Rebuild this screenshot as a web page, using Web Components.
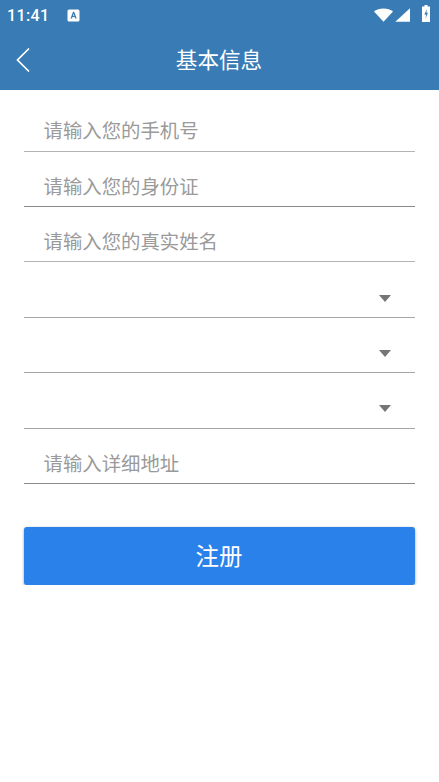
<!DOCTYPE html>
<html lang="zh">
<head>
<meta charset="UTF-8">
<title>基本信息</title>
<style>
  html, body { margin: 0; padding: 0; background: #fff; }
  body { font-family: Roboto, "Noto Sans CJK SC", sans-serif; }
</style>
</head>
<body>
  <app-header title="基本信息" time="11:41"></app-header>
  <main-form>
    <text-row>请输入您的手机号</text-row>
    <text-row dark>请输入您的身份证</text-row>
    <text-row>请输入您的真实姓名</text-row>
    <select-row></select-row>
    <select-row></select-row>
    <select-row></select-row>
    <text-row dark>请输入详细地址</text-row>
    <submit-button>注册</submit-button>
  </main-form>

<script>
  class AppHeader extends HTMLElement {
    constructor() {
      super();
      this.attachShadow({ mode: 'open' });
      this.shadowRoot.innerHTML = `
        <style>
          :host { display: block; height: 90px; background: #397cb5; color: #fff; }
          .status { height: 30px; display: flex; align-items: center; padding: 0 9px 0 7px; }
          .time { font: 500 16px Roboto, sans-serif; letter-spacing: .35px; width: 60px; }
          .right { margin-left: auto; display: flex; align-items: center; gap: 2px; margin-top: -1px; }
          .bar { height: 60px; display: flex; align-items: center; position: relative; justify-content: center; padding-bottom: 3px; box-sizing: border-box; }
          .bar h1 { margin: 0 1px 0 0; font: 400 21.6px "Noto Sans CJK SC", sans-serif; }
          .back { position: absolute; left: 15px; top: 17px; }
        </style>
        <div class="status">
          <span class="time"></span>
          <svg width="13" height="13" viewBox="0 0 13 13">
            <rect x=".5" y=".5" width="12" height="12" rx="1.500" fill="#fff"/>
            <path d="M3.500 9.500 6 2.800h1.200L9.700 9.500H8.200L7.700 8H5.500L5 9.500ZM5.900 6.800h1.400L6.600 4.800Z" fill="#397cb5"/>
          </svg>
          <div class="right">
            <svg width="19" height="14" viewBox="0 0 19 14"><path d="M0 3.600C2.400 1.500 5.700.4 9.500.4s7.100 1.100 9.500 3.200L9.500 13.800Z" fill="#fff"/></svg>
            <svg width="15" height="14" viewBox="0 0 15 14"><path d="M15 .2V13.800H.3Z" fill="#fff"/></svg>
            <svg width="8" height="17" viewBox="0 0 8 17" style="margin-left:10px;margin-top:-2px">
              <path d="M2.500 0h3v1.500H8V17H0V1.500H2.500Z" fill="#fff"/>
              <path d="M5 4 2.300 9.500h1.900l-.8 4.500L6 7.800H4.400Z" fill="#397cb5"/>
            </svg>
          </div>
        </div>
        <div class="bar">
          <svg class="back" width="16" height="26" viewBox="0 0 16 26">
            <path d="M14 1.500 2.500 13 14 24.500" fill="none" stroke="#fff" stroke-width="1.700"/>
          </svg>
          <h1></h1>
        </div>`;
      this.shadowRoot.querySelector('h1').textContent = this.getAttribute('title');
      this.shadowRoot.querySelector('.time').textContent = this.getAttribute('time');
    }
  }

  class MainForm extends HTMLElement {
    constructor() {
      super();
      this.attachShadow({ mode: 'open' });
      this.shadowRoot.innerHTML = `
        <style>
          :host { display: flex; flex-direction: column; padding: 6.2px 24px 0; }
        </style>
        <slot></slot>`;
    }
  }

  class TextRow extends HTMLElement {
    constructor() {
      super();
      this.attachShadow({ mode: 'open' });
      this.shadowRoot.innerHTML = `
        <style>
          :host { display: flex; align-items: center; box-sizing: border-box; height: 55.4px;
                  padding: 13px 0 0 19.5px; border-bottom: 1px solid #b4b4b4;
                  font: 400 19.4px "Noto Sans CJK SC", sans-serif; color: #9a9a9a; }
          :host([dark]) { border-bottom-color: #8a8a8a; }
        </style>
        <slot></slot>`;
    }
  }

  class SelectRow extends HTMLElement {
    constructor() {
      super();
      this.attachShadow({ mode: 'open' });
      this.shadowRoot.innerHTML = `
        <style>
          :host { display: flex; align-items: center; justify-content: flex-end; box-sizing: border-box;
                  height: 55.4px; padding: 17px 24px 0 0; border-bottom: 1px solid #a6a6a6; }
          .arrow { width: 0; height: 0; border: 6px solid transparent; border-bottom: 0; border-top: 7px solid #757575; }
        </style>
        <div class="arrow"></div>`;
    }
  }

  class SubmitButton extends HTMLElement {
    constructor() {
      super();
      this.attachShadow({ mode: 'open' });
      this.shadowRoot.innerHTML = `
        <style>
          :host { display: flex; align-items: center; justify-content: center; height: 58px; margin-top: 43px;
                  background: #2a81ea; border-radius: 3px; color: #fff;
                  box-shadow: 0 1px 3px rgba(0,0,0,.4);
                  font: 400 23.5px "Noto Sans CJK SC", sans-serif; padding-right: 1px; padding-bottom: 1px; box-sizing: border-box; }
        </style>
        <slot></slot>`;
    }
  }

  customElements.define('app-header', AppHeader);
  customElements.define('main-form', MainForm);
  customElements.define('text-row', TextRow);
  customElements.define('select-row', SelectRow);
  customElements.define('submit-button', SubmitButton);
</script>
</body>
</html>
